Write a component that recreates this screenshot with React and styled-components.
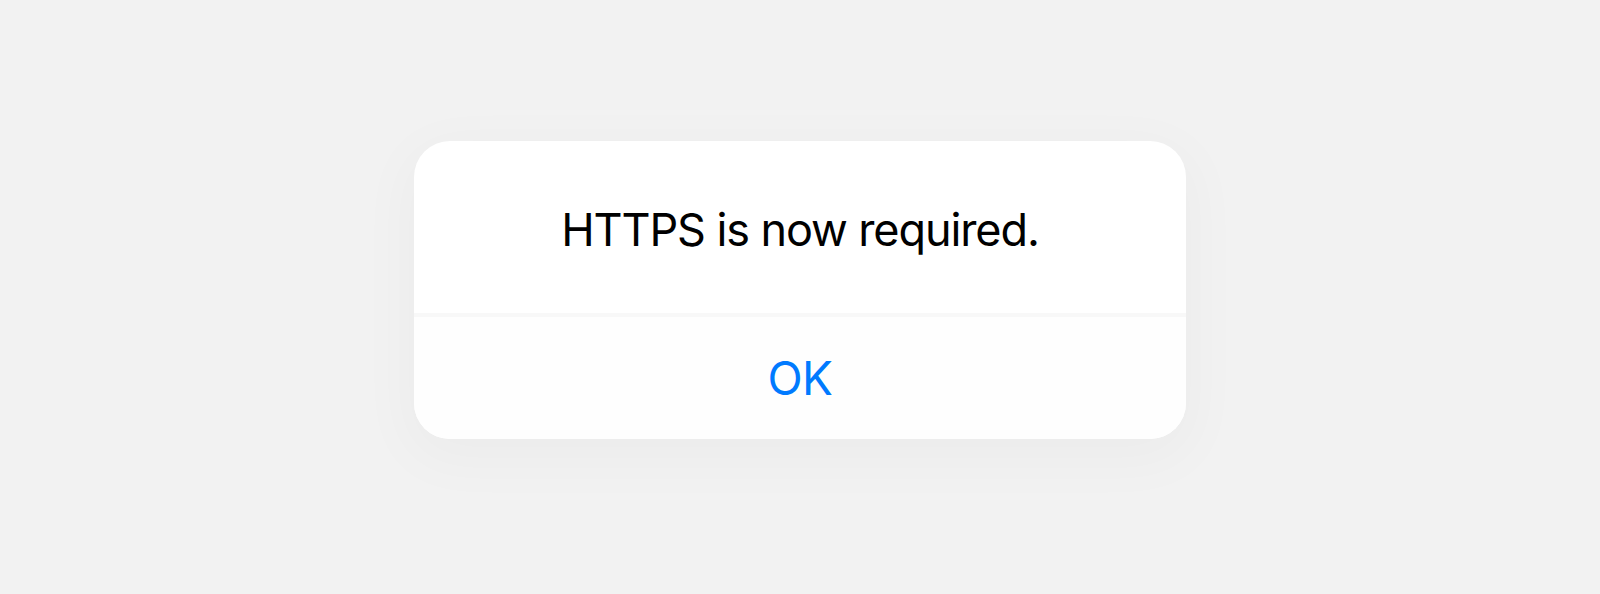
import React from 'react';
import styled, { createGlobalStyle } from 'styled-components';

const GlobalStyle = createGlobalStyle`
    html, body {
        margin: 0;
        padding: 0;
        background: #f2f2f2;
        font-family: Inter, "Liberation Sans", sans-serif;
    }
`

const Page = styled.div`
    display: flex;
    justify-content: center;
    align-items: flex-start;
    height: 594px;
    padding-top: 141px;
    box-sizing: border-box;
`

const Alert = styled.div`
    width: 772px;
    display: flex;
    flex-direction: column;
    background: #ffffff;
    border-radius: 36px;
    overflow: hidden;
    box-shadow: 0 14px 56px 10px rgba(0, 0, 0, 0.028);
`

const Message = styled.div`
    height: 172px;
    padding-top: 5px;
    box-sizing: border-box;
    display: flex;
    align-items: center;
    justify-content: center;
    font-size: 45px;
    color: #000;
    letter-spacing: -1.1px;
`

const Divider = styled.div`
    height: 4px;
    background: #f8f8f8;
`

const Action = styled.button`
    height: 122px;
    border: none;
    background: #fefefe;
    color: #007aff;
    font-family: inherit;
    font-size: 46px;
    letter-spacing: -0.6px;
    cursor: pointer;
    padding: 0;
`

const App = () => {
    return (
        <>
            <GlobalStyle />
            <Page>
                <Alert>
                    <Message>HTTPS is now required.</Message>
                    <Divider />
                    <Action>OK</Action>
                </Alert>
            </Page>
        </>
    );
}

export default App;
